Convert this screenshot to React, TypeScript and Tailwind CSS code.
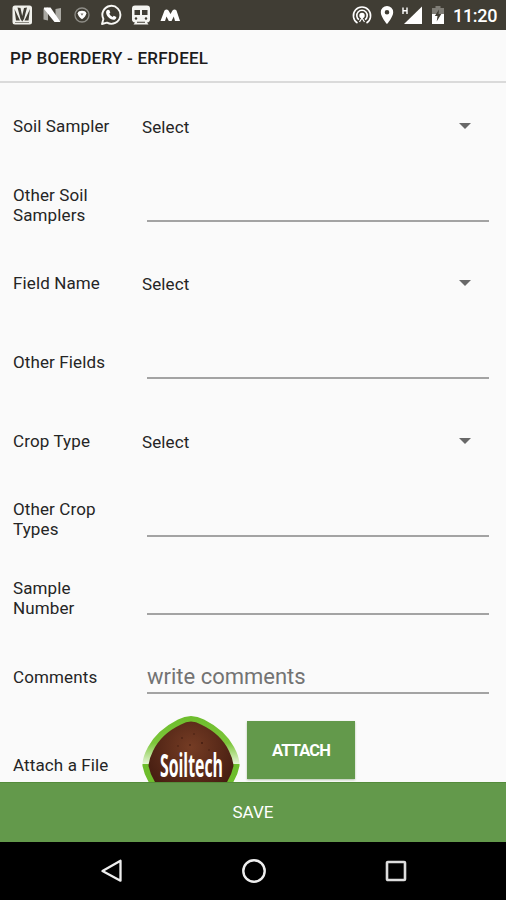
import type { ReactNode } from "react";

interface FormField {
  label: string;
  kind: "select" | "input";
  placeholder?: string;
}

const FIELDS: FormField[] = [
  { label: "Soil Sampler", kind: "select" },
  { label: "Other Soil Samplers", kind: "input" },
  { label: "Field Name", kind: "select" },
  { label: "Other Fields", kind: "input" },
  { label: "Crop Type", kind: "select" },
  { label: "Other Crop Types", kind: "input" },
  { label: "Sample Number", kind: "input" },
  { label: "Comments", kind: "input", placeholder: "write comments" },
];

function StatusBar() {
  return (
    <div className="flex h-[30px] shrink-0 items-center bg-[#403d34] pl-[11px] pr-[9px] text-white">
      {/* Notifications */}
      <svg className="h-[22px] w-[22px]" viewBox="0 0 22 22">
        <rect x="1.5" y="1.5" width="19.500" height="19" rx="2.500" fill="#f0f0eb" />
        <path d="M3.500 5l5.500 11.500H5zM19 5l-5.500 11.500h4z" fill="#403d34" />
        <path d="M6.500 3.500l3 .5 1.700 8L13 4l3-.5-3 11.500-1.800 2.500L9.500 15z" fill="#403d34" />
        <path d="M4 18.500h14" stroke="#8d8b84" strokeWidth="1" />
      </svg>
      <svg className="ml-[9px] h-[20px] w-[20px]" viewBox="0 0 20 20">
        <path d="M1.500 3.500l4.500-1v13L1.500 14.500zM13.500 4l5.500-1v12.500l-5.500 1.500z" fill="#aaa9a3" />
        <path d="M2 2.500h6.500l10 14.500h-6L2 4z" fill="#fff" />
      </svg>
      <svg className="ml-[11px] h-[18px] w-[18px]" viewBox="0 0 18 18">
        <circle cx="9" cy="9" r="7" fill="none" stroke="#8e8d87" strokeWidth="1.300" />
        <path d="M9 4.800c2 0 4.300.8 4.300 2.500 0 2-2 4.700-4.300 6-2.300-1.300-4.300-4-4.300-6 0-1.700 2.300-2.500 4.300-2.500z" fill="#fff" />
        <path d="M7.500 7.500h3L9 9.700z" fill="#77756e" />
      </svg>
      <svg className="ml-[9px] h-[22px] w-[22px]" viewBox="0 0 22 22">
        <path d="M2 20l1.400-5A9 9 0 1 1 7 18.700z" fill="none" stroke="#f8f8f5" strokeWidth="1.900" strokeLinejoin="round" />
        <path d="M7.700 5.800l1.600.1 1 2.500-1 1.400c.8 1.500 1.900 2.500 3.300 3.200l1.200-1.300 2.500 1.200c.2 1.800-1.200 2.900-2.900 2.900-3.600-.4-7.200-4-7.300-7.300 0-1.200.6-2.200 1.600-2.700z" fill="#fff" />
      </svg>
      <svg className="ml-[9px] h-[20px] w-[20px]" viewBox="0 0 20 20">
        <path d="M4 .500h12q3 0 3 3v11q0 2.500-3 3l1.500 2h-15L4 17.500q-3-.5-3-3v-11q0-3 3-3z" fill="#f4f4f0" />
        <path d="M3.500 5H9v5H3.500zM11 5h5.500v5H11zM6 16.800h8v1H6z" fill="#403d34" />
        <circle cx="5" cy="13.500" r="1.200" fill="#403d34" />
        <circle cx="15" cy="13.500" r="1.200" fill="#403d34" />
      </svg>
      <svg className="ml-[9px] h-[16px] w-[20px]" viewBox="0 0 20 16">
        <path d="M.500 14L4.500 3.500q2-2 4 0l2 3.500 2-3.500q2-2 4 0L20 14h-5L13.800 9.500 11.500 14H8.800L6.500 9.500 5 14z" fill="#fff" />
      </svg>

      {/* Connectivity */}
      <svg className="ml-auto mr-[-1px] h-[20px] w-[20px]" viewBox="0 0 20 20" fill="none" stroke="#fff" strokeWidth="1.600">
        <path d="M5.500 18a8.600 8.600 0 1 1 9 0M7 14.700a5.200 5.200 0 1 1 6 0" />
        <circle cx="10" cy="10.500" r="1.900" fill="#fff" />
        <path d="M7.500 17l2.500-4 2.500 4" strokeWidth="1.200" />
      </svg>
      <svg className="ml-[9px] h-[20px] w-[14px]" viewBox="0 0 14 20">
        <path fillRule="evenodd" d="M7 1a6.200 6.200 0 0 0-6.200 6.200C.8 12 7 19 7 19s6.200-7 6.200-11.800A6.200 6.200 0 0 0 7 1zm0 4a2.300 2.300 0 1 1 0 4.600A2.300 2.300 0 0 1 7 5z" fill="#fff" />
      </svg>
      <svg className="ml-[7px] h-[20px] w-[22px]" viewBox="0 0 22 20">
        <path d="M2 2.500v6.500M6 2.500v6.500M2 5.700h4" stroke="#fff" strokeWidth="1.400" />
        <path d="M21 1.500v17.500H3z" fill="#fff" />
      </svg>
      <svg className="ml-[8px] h-[20px] w-[14px]" viewBox="0 0 14 20">
        <path d="M4.500 1h5v2H13v7H1V3h3.500z" fill="#7f7d76" />
        <path d="M1 9h12v10H1z" fill="#fff" />
        <path d="M8 4.500L3.800 11h2.700l-.8 5.500L10.300 9H7.500z" fill="#403d34" />
      </svg>
      <span className="ml-[8px] mt-px w-[44px] whitespace-nowrap text-[18px] font-medium leading-none tracking-[-0.300px]">
        11:20
      </span>
    </div>
  );
}

function Row({ label, children }: { label: string; children: ReactNode }) {
  return (
    <div className="flex h-[78.700px] shrink-0 items-center pl-[13px] pr-[17px]">
      <div className="w-[129px] shrink-0 pr-6 text-[17px] leading-5 tracking-[0.120px] text-[#252525]">{label}</div>
      {children}
    </div>
  );
}

function SelectBox() {
  return (
    <div className="flex flex-1 items-center justify-between pr-[18px] text-[17px] leading-5 tracking-[0.120px] text-[#252525]">
      <span className="mt-0.5">Select</span>
      <svg className="h-[6px] w-[12px]" viewBox="0 0 12 6">
        <path d="M0 0h12L6 6z" fill="#686868" />
      </svg>
    </div>
  );
}

function TextBox({ placeholder }: { placeholder?: string }) {
  return (
    <div className="ml-[5px] flex h-[35px] flex-1 items-center border-b-2 border-[#a3a3a3]">
      <input
        className="mt-[2px] w-full bg-transparent text-[22px] leading-7 text-[#222] outline-none placeholder:text-[#737373]"
        placeholder={placeholder}
      />
    </div>
  );
}

function SoiltechLogo() {
  return (
    <svg className="h-[100px] w-[98px] shrink-0" viewBox="0 0 98 100">
      <defs>
        <linearGradient id="rim" x1="0" y1="0" x2="0" y2="1">
          <stop offset="0" stopColor="#6dbd2c" />
          <stop offset="0.280" stopColor="#7cc63a" />
          <stop offset="0.490" stopColor="#e4f5d4" />
          <stop offset="0.500" stopColor="#6dbd2c" />
          <stop offset="1" stopColor="#6dbd2c" />
        </linearGradient>
        <radialGradient id="soil" cx="0.500" cy="0.300" r="0.600">
          <stop offset="0" stopColor="#753c24" />
          <stop offset="1" stopColor="#451d11" />
        </radialGradient>
      </defs>
      <path d="M36 3.500Q49-3.500 62 3.500Q83 14 92 31Q98 42 97.500 50Q95 64 82 79Q49 115 16 79Q3 64 .500 50Q0 42 6 31Q15 14 36 3.500z" fill="url(#rim)" />
      <path d="M39 8.500Q49 2.500 59 8.500Q79 18 87 35Q91 43 91.500 50Q89 63 77 77Q49 105 21 77Q9 63 6.500 50Q7 43 11 35Q19 18 39 8.500z" fill="url(#soil)" />
      <g fill="#3f1a0f">
        <circle cx="40" cy="22" r="0.800" />
        <circle cx="52" cy="18" r="0.700" />
        <circle cx="60" cy="27" r="0.900" />
        <circle cx="36" cy="30" r="0.700" />
        <circle cx="48" cy="29" r="0.800" />
        <circle cx="67" cy="34" r="0.700" />
      </g>
      <text
        transform="translate(18 60.500) scale(0.480 1)"
        className="fill-white font-['Open_Sans',sans-serif] text-[33px] font-bold"
      >
        Soiltech
      </text>
    </svg>
  );
}

function NavBar() {
  return (
    <div className="flex h-[58px] shrink-0 items-center justify-between bg-black pl-[100px] pr-[98px]">
      <svg className="h-[24px] w-[24px]" viewBox="0 0 24 24" fill="none" stroke="#eee" strokeWidth="2.300" strokeLinejoin="round">
        <path d="M20.500 1.700v20L2.500 12z" />
      </svg>
      <svg className="h-[26px] w-[26px]" viewBox="0 0 26 26" fill="none" stroke="#eee" strokeWidth="2.400">
        <circle cx="13" cy="13" r="10.700" />
      </svg>
      <svg className="h-[24px] w-[24px]" viewBox="0 0 24 24" fill="none" stroke="#ddd" strokeWidth="2.600">
        <rect x="3" y="3" width="18" height="18" rx="0.800" />
      </svg>
    </div>
  );
}

export default function App() {
  return (
    <div className="flex h-[900px] w-[506px] flex-col overflow-hidden bg-[#fafafa] font-[Roboto,sans-serif]">
      <StatusBar />

      <header className="flex h-[53px] shrink-0 items-center border-b-2 border-[#dadada] pl-[10px] pt-[6px] text-[17px] font-medium tracking-[0.230px] text-[#1c1c1c]">
        PP BOERDERY - ERFDEEL
      </header>

      <main className="flex min-h-0 flex-1 flex-col overflow-hidden pt-[3.500px]">
        {FIELDS.map((field) => (
          <Row key={field.label} label={field.label}>
            {field.kind === "select" ? <SelectBox /> : <TextBox placeholder={field.placeholder} />}
          </Row>
        ))}

        {/* Attachment row continues under the save button */}
        <div className="flex h-[100px] shrink-0 items-start pl-[13px]">
          <div className="mt-[39px] w-[129px] shrink-0 text-[17px] leading-5 tracking-[0.120px] text-[#252525]">
            Attach a File
          </div>
          <SoiltechLogo />
          <button className="ml-[7px] mt-[5px] h-[58px] w-[108px] bg-[#63994b] pt-[3px] text-[16.500px] font-bold tracking-[-0.900px] text-white shadow-[0_1px_2px_#b5c6ac]">
            ATTACH
          </button>
        </div>
      </main>

      <button className="h-[60px] shrink-0 border-t border-[#548b3b] bg-[#63994b] pt-px text-[17px] text-white">SAVE</button>
      <NavBar />
    </div>
  );
}
